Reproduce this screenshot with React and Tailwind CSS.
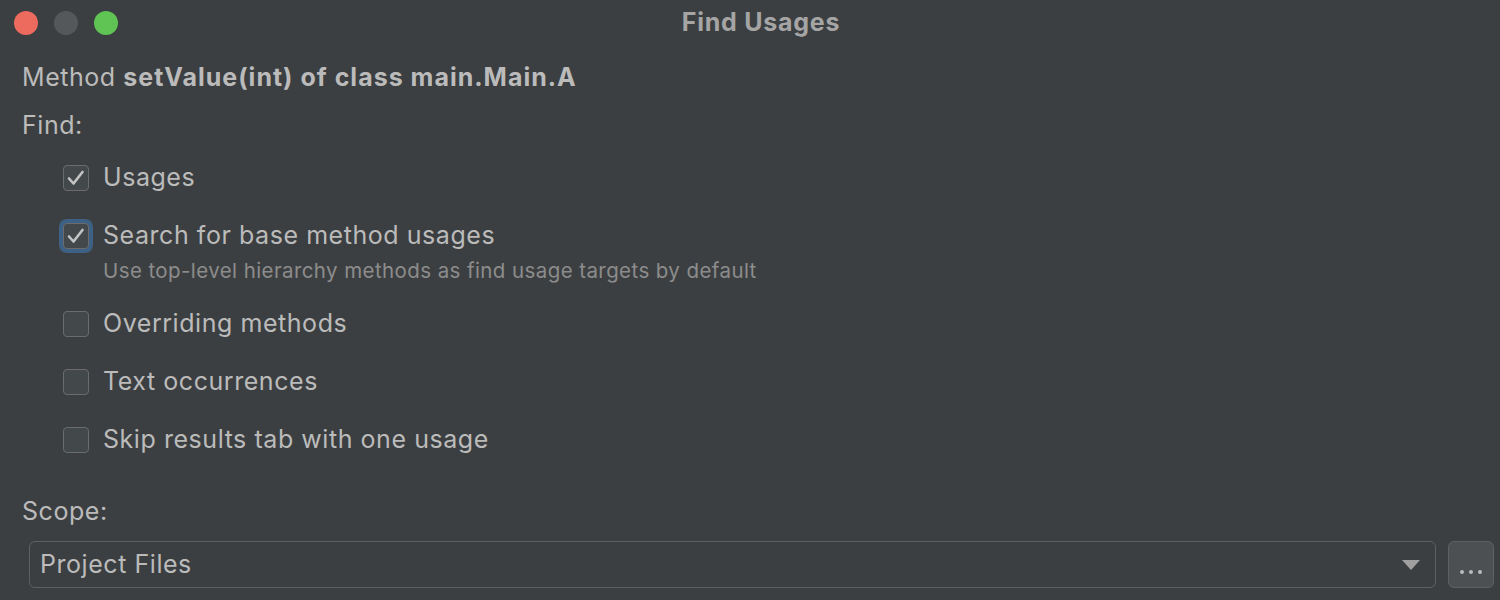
import React from 'react';

const font = { fontFamily: 'Inter, "Noto Sans", sans-serif' };

const Check = ({ checked, focused }) => (
  <div
    className={
      'flex h-[26px] w-[26px] items-center justify-center rounded-[4px] border border-[#6b6b6b] bg-[#43494a] ' +
      (focused ? 'shadow-[0_0_0_4px_#3d6185]' : '')
    }
  >
    {checked && (
      <svg width="20" height="18" viewBox="0 0 20 18" fill="none">
        <path d="M3 9.5 L7.5 14.5 L16.5 3" stroke="#c4c4c4" strokeWidth="2.6" strokeLinecap="round" strokeLinejoin="round" />
      </svg>
    )}
  </div>
);

const Option = ({ label, checked, focused, hint }) => (
  <div className="flex flex-col">
    <div className="flex h-[30px] items-center">
      <div className="ml-[63px] flex w-[40px]">
        <Check checked={checked} focused={focused} />
      </div>
      <span className="text-[25px] tracking-[0.022em] text-[#bbbbbb]">{label}</span>
    </div>
    {hint && <div className="ml-[103px] mt-[10px] text-[20.5px] leading-[20px] tracking-[0.02em] text-[#8c8c8c]">{hint}</div>}
  </div>
);

export default function App() {
  return (
    <div className="h-[600px] w-[1500px] overflow-hidden bg-[#3c3f41]" style={font}>
      {/* Title bar */}
      <div className="relative flex h-[46px] items-center">
        <div className="ml-[14px] flex gap-[16px]">
          <div className="h-[24px] w-[24px] rounded-full bg-[#ed6a5e]" />
          <div className="h-[24px] w-[24px] rounded-full bg-[#55585a]" />
          <div className="h-[24px] w-[24px] rounded-full bg-[#5fc453]" />
        </div>
        <div className="absolute left-0 right-0 top-0 flex h-[46px] items-center justify-center pl-[22px] text-[25px] font-bold tracking-[0.03em] text-[#a5a5a5]">
          Find Usages
        </div>
      </div>

      <div className="ml-[22px] mt-[15px] flex h-[34px] items-center text-[25px] tracking-[0.022em] text-[#bbbbbb]">
        <span>Method&nbsp;</span>
        <span className="font-bold tracking-[0.04em]">setValue(int) of class main.Main.A</span>
      </div>
      <div className="ml-[22px] mt-[14px] flex h-[34px] items-center text-[25px] tracking-[0.022em] text-[#bbbbbb]">Find:</div>

      <div className="mt-[20px] flex flex-col gap-[28px]">
        <Option label="Usages" checked />
        <Option label="Search for base method usages" checked focused hint="Use top-level hierarchy methods as find usage targets by default" />
        <Option label="Overriding methods" />
        <Option label="Text occurrences" />
        <Option label="Skip results tab with one usage" />
      </div>

      <div className="ml-[22px] mt-[40px] flex h-[34px] items-center text-[25px] tracking-[0.022em] text-[#bbbbbb]">Scope:</div>

      <div className="mt-[12px] flex items-center">
        <div className="ml-[29px] flex h-[47px] w-[1407px] items-center justify-between rounded-[6px] border-[1.5px] border-[#5e6163] bg-[#3c3f41] pl-[10px] pr-[14px]">
          <span className="text-[25px] tracking-[0.022em] text-[#bbbbbb]">Project Files</span>
          <svg width="20" height="12" viewBox="0 0 20 12">
            <path d="M1 1 H19 L10 11 Z" fill="#a0a0a0" />
          </svg>
        </div>
        <div className="ml-[12px] flex h-[47px] w-[46px] items-end justify-center rounded-[6px] border-[1.5px] border-[#5e6163] bg-[#4c5052] pb-[13px]">
          <div className="flex gap-[5px]">
            <div className="h-[4px] w-[4px] rounded-full bg-[#bbbbbb]" />
            <div className="h-[4px] w-[4px] rounded-full bg-[#bbbbbb]" />
            <div className="h-[4px] w-[4px] rounded-full bg-[#bbbbbb]" />
          </div>
        </div>
      </div>
    </div>
  );
}
